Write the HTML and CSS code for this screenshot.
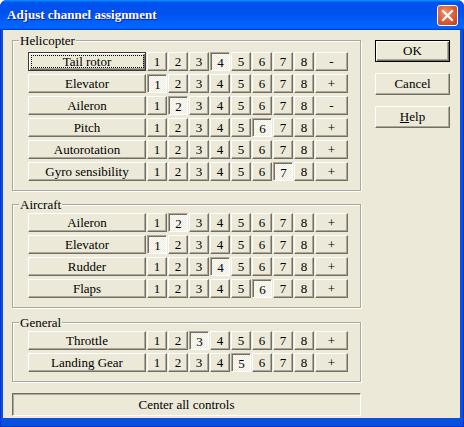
FILE: index.html
```html
<!DOCTYPE html>
<html>
<head>
    <title>Adjust channel assignment</title>
    <link rel="stylesheet" href="styles.css">
</head>
<body>
    <div class="window">
        <div class="titlebar">
            <span class="title">Adjust channel assignment</span>
            <span class="close">
                <svg width="13" height="13" viewBox="0 0 13 13"><path d="M2 2 L11 11 M11 2 L2 11" stroke="#fff" stroke-width="2.2" stroke-linecap="square"/></svg>
            </span>
        </div>
        <div class="client">
            <div class="main">
                <div class="group heli">
                    <span class="group-title">Helicopter</span>
                    <div class="rows">
                        <div class="row"><button class="name focus">Tail rotor</button><button class="ch">1</button><button class="ch">2</button><button class="ch">3</button><button class="ch on">4</button><button class="ch">5</button><button class="ch">6</button><button class="ch">7</button><button class="ch">8</button><button class="sign">-</button></div>
                        <div class="row"><button class="name">Elevator</button><button class="ch on">1</button><button class="ch">2</button><button class="ch">3</button><button class="ch">4</button><button class="ch">5</button><button class="ch">6</button><button class="ch">7</button><button class="ch">8</button><button class="sign">+</button></div>
                        <div class="row"><button class="name">Aileron</button><button class="ch">1</button><button class="ch on">2</button><button class="ch">3</button><button class="ch">4</button><button class="ch">5</button><button class="ch">6</button><button class="ch">7</button><button class="ch">8</button><button class="sign">-</button></div>
                        <div class="row"><button class="name">Pitch</button><button class="ch">1</button><button class="ch">2</button><button class="ch">3</button><button class="ch">4</button><button class="ch">5</button><button class="ch on">6</button><button class="ch">7</button><button class="ch">8</button><button class="sign">+</button></div>
                        <div class="row"><button class="name">Autorotation</button><button class="ch">1</button><button class="ch">2</button><button class="ch">3</button><button class="ch">4</button><button class="ch">5</button><button class="ch">6</button><button class="ch">7</button><button class="ch">8</button><button class="sign">+</button></div>
                        <div class="row"><button class="name">Gyro sensibility</button><button class="ch">1</button><button class="ch">2</button><button class="ch">3</button><button class="ch">4</button><button class="ch">5</button><button class="ch">6</button><button class="ch on">7</button><button class="ch">8</button><button class="sign">+</button></div>
                    </div>
                </div>
                <div class="group aircraft">
                    <span class="group-title">Aircraft</span>
                    <div class="rows">
                        <div class="row"><button class="name">Aileron</button><button class="ch">1</button><button class="ch on">2</button><button class="ch">3</button><button class="ch">4</button><button class="ch">5</button><button class="ch">6</button><button class="ch">7</button><button class="ch">8</button><button class="sign">+</button></div>
                        <div class="row"><button class="name">Elevator</button><button class="ch on">1</button><button class="ch">2</button><button class="ch">3</button><button class="ch">4</button><button class="ch">5</button><button class="ch">6</button><button class="ch">7</button><button class="ch">8</button><button class="sign">+</button></div>
                        <div class="row"><button class="name">Rudder</button><button class="ch">1</button><button class="ch">2</button><button class="ch">3</button><button class="ch on">4</button><button class="ch">5</button><button class="ch">6</button><button class="ch">7</button><button class="ch">8</button><button class="sign">+</button></div>
                        <div class="row"><button class="name">Flaps</button><button class="ch">1</button><button class="ch">2</button><button class="ch">3</button><button class="ch">4</button><button class="ch">5</button><button class="ch on">6</button><button class="ch">7</button><button class="ch">8</button><button class="sign">+</button></div>
                    </div>
                </div>
                <div class="group general">
                    <span class="group-title">General</span>
                    <div class="rows">
                        <div class="row"><button class="name">Throttle</button><button class="ch">1</button><button class="ch">2</button><button class="ch on">3</button><button class="ch">4</button><button class="ch">5</button><button class="ch">6</button><button class="ch">7</button><button class="ch">8</button><button class="sign">+</button></div>
                        <div class="row"><button class="name">Landing Gear</button><button class="ch">1</button><button class="ch">2</button><button class="ch">3</button><button class="ch">4</button><button class="ch on">5</button><button class="ch">6</button><button class="ch">7</button><button class="ch">8</button><button class="sign">+</button></div>
                    </div>
                </div>
                <button class="center">Center all controls</button>
            </div>
            <div class="side">
                <button class="ok">OK</button>
                <button>Cancel</button>
                <button><u>H</u>elp</button>
            </div>
        </div>
    </div>
</body>
</html>
```

FILE: styles.css
```css
body {
    margin: 0;
    background: #ffffff;
    font-family: "Liberation Serif", "Times New Roman", Tinos, "Noto Serif", FreeSerif, "Nimbus Roman", "DejaVu Serif", serif;
    font-size: 13px;
}

.window {
    width: 464px;
    height: 427px;
    display: flex;
    flex-direction: column;
    background: #0a50de;
    border-radius: 7px 7px 0 0;
    box-shadow: inset 1px 0 #0831d9, inset -1px -1px #0831d9;
}

.titlebar {
    flex: none;
    height: 30px;
    display: flex;
    align-items: center;
    justify-content: space-between;
    padding: 0 6px 0 7px;
    border-radius: 7px 7px 0 0;
    background: linear-gradient(180deg, #0997ff, #0053ee 8%, #0050ee 40%, #0066ff 88%, #0066ff 93%, #005bff 95%, #003dd7 96%, #003dd7);
}

.title {
    color: #ffffff;
    font-weight: bold;
    font-size: 13px;
    text-shadow: 1px 1px #0f1f8a;
}

.close {
    width: 21px;
    height: 21px;
    box-sizing: border-box;
    border: 1px solid #ffffff;
    border-radius: 3px;
    background: radial-gradient(circle at 40% 35%, #f2936f, #dd5a33 55%, #c23c1c);
    display: flex;
    align-items: center;
    justify-content: center;
}

.client {
    flex: 1;
    margin: 0 4px 9px 3px;
    padding: 10px 0 0 9px;
    background: #ece9d8;
    display: flex;
    gap: 14px;
}

.main {
    display: flex;
    flex-direction: column;
}

.group {
    position: relative;
    width: 349px;
    box-sizing: border-box;
    border: 1px solid #aca899;
    box-shadow: inset 1px 1px #ffffff, 1px 1px #ffffff;
    padding: 8px 12px 9px 15px;
}

.group.heli {
    padding-top: 11px;
}

.group.aircraft {
    margin-top: 13px;
}

.group.general {
    margin-top: 14px;
}

.group-title {
    position: absolute;
    top: -8px;
    left: 6px;
    padding: 0 1px;
    line-height: 15px;
    background: #ece9d8;
}

.rows {
    display: flex;
    flex-direction: column;
    gap: 3px;
}

.row {
    display: flex;
    gap: 1px;
}

button {
    font: inherit;
    color: #000000;
    background: #ece9d8;
    border: 1px solid;
    border-color: #ffffff #716f64 #716f64 #ffffff;
    box-shadow: inset -1px -1px #aca899;
    margin: 0;
    padding: 0;
    height: 19px;
    line-height: 17px;
}

.name {
    width: 118px;
}

.name.focus {
    position: relative;
    border-color: #3a3a3a;
    box-shadow: inset 1px 1px #ffffff, inset -1px -1px #716f64, inset -2px -2px #aca899;
}

.name.focus::after {
    content: "";
    position: absolute;
    top: 2px;
    left: 2px;
    right: 1px;
    bottom: 2px;
    border: 1px dotted #000000;
}

.ch {
    width: 20px;
}

.ch.on {
    border-color: #aca899 #ffffff #ffffff #aca899;
    box-shadow: inset 1px 1px #716f64;
    background: repeating-conic-gradient(#ffffff 0 25%, #ece9d8 0 50%) 0 0 / 2px 2px;
    padding: 1px 0 0 1px;
}

.sign {
    width: 33px;
}

.center {
    width: 349px;
    height: 23px;
    margin-top: 11px;
    border-color: #716f64 #ffffff #ffffff #716f64;
    box-shadow: inset 1px 1px #aca899;
}

.side {
    display: flex;
    flex-direction: column;
    gap: 11px;
}

.side button {
    width: 75px;
    height: 22px;
    line-height: 20px;
}

.side .ok {
    border-color: #000000;
    box-shadow: inset 1px 1px #ffffff, inset -1px -1px #716f64, inset -2px -2px #aca899;
}
```
